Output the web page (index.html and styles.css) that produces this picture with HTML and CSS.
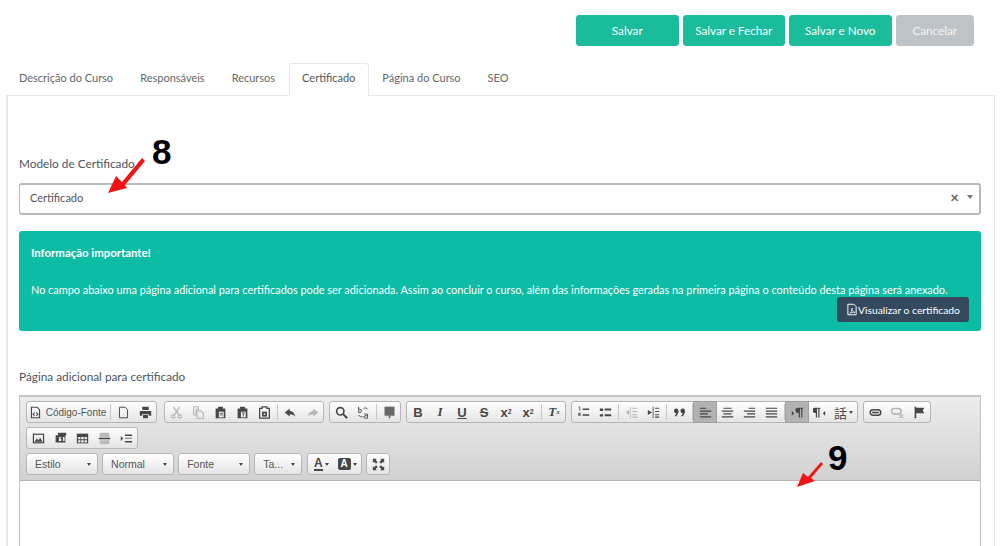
FILE: index.html
```html
<!DOCTYPE html>
<html lang="pt-BR">
<head>
    <meta charset="UTF-8">
    <title>Certificado</title>
    <link rel="stylesheet" href="styles.css">
</head>
<body>
    <svg class="sprite" width="0" height="0">
        <symbol id="i-source" viewBox="0 0 16 16"><path d="M3 1.500h7l3 3v10H3z" fill="none" stroke="currentColor" stroke-width="1.400"/><path d="M7 8l-2 2 2 2M9 8l2 2-2 2" fill="none" stroke="currentColor" stroke-width="1.300"/></symbol>
        <symbol id="i-new" viewBox="0 0 16 16"><path d="M3 1.500h7l3 3v10H3z" fill="none" stroke="currentColor" stroke-width="1.200"/></symbol>
        <symbol id="i-print" viewBox="0 0 16 16"><path d="M4 1h8v4H4zM1 6h14v6h-3v-2H4v2H1zM5 11h6v4H5z" fill="currentColor"/></symbol>
        <symbol id="i-cut" viewBox="0 0 16 16"><path d="M4 1l7 10M12 1L5 11" stroke="currentColor" stroke-width="1.600" fill="none"/><circle cx="4" cy="13" r="2" fill="none" stroke="currentColor" stroke-width="1.500"/><circle cx="12" cy="13" r="2" fill="none" stroke="currentColor" stroke-width="1.500"/></symbol>
        <symbol id="i-copy" viewBox="0 0 16 16"><path d="M2 1h6v3H5v7H2zM6 6h5l3 3v6H6z" fill="none" stroke="currentColor" stroke-width="1.300"/></symbol>
        <symbol id="i-paste" viewBox="0 0 16 16"><path d="M2 3h3V1h6v2h3v12H2z" fill="currentColor"/><path d="M6 7h6v7H6z" fill="#f1f1f1"/><path d="M7 9h4M7 11h4" stroke="currentColor"/></symbol>
        <symbol id="i-paste-t" viewBox="0 0 16 16"><path d="M2 3h3V1h6v2h3v12H2z" fill="currentColor"/><path d="M6 7h6v7H6z" fill="#f1f1f1"/><path d="M7 8.500h4M9 8.500V13" stroke="currentColor"/></symbol>
        <symbol id="i-paste-w" viewBox="0 0 16 16"><path d="M2 3h3V1h6v2h3v12H2z" fill="none" stroke="currentColor" stroke-width="1.500"/><path d="M5 7h6v6H5z" fill="currentColor"/><path d="M7 9h2v2H7z" fill="#f1f1f1"/></symbol>
        <symbol id="i-undo" viewBox="0 0 16 16"><path d="M7 3L1 8l6 5v-3c3 0 5 1 7 3-1-4-3-7-7-7z" fill="currentColor"/></symbol>
        <symbol id="i-redo" viewBox="0 0 16 16"><path d="M9 3l6 5-6 5v-3c-3 0-5 1-7 3 1-4 3-7 7-7z" fill="currentColor"/></symbol>
        <symbol id="i-find" viewBox="0 0 16 16"><circle cx="6.500" cy="6.500" r="4.500" fill="none" stroke="currentColor" stroke-width="2"/><path d="M10 10l5 5" stroke="currentColor" stroke-width="2.400"/></symbol>
        <symbol id="i-replace" viewBox="0 0 16 16"><path d="M2 1v7h1.500a2 2 0 0 0 0-4H2M9 10h4v5h-3a1.500 1.500 0 0 1 0-3h3M8 3c2-1 4-1 5 1M7 13c-2 1-4 0-5-2" fill="none" stroke="currentColor" stroke-width="1.100"/></symbol>
        <symbol id="i-select" viewBox="0 0 16 16"><path d="M2 1h12v11H9v3H7v-3H2z" fill="#666"/><path d="M2 1h12v11H2z" fill="none" stroke="#999" stroke-dasharray="1 1"/></symbol>
        <symbol id="i-ol" viewBox="0 0 16 16"><path d="M7 3h8v2H7zM7 10h8v2H7z" fill="currentColor"/><path d="M2 1.500l1.500-.5v5M1 9h3v1.500H2v1h2.500" fill="none" stroke="currentColor"/></symbol>
        <symbol id="i-ul" viewBox="0 0 16 16"><path d="M7 3h8v2.500H7zM7 10h8v2.500H7zM1 3h4v3H1zM1 10h4v3H1z" fill="currentColor"/></symbol>
        <symbol id="i-outdent" viewBox="0 0 16 16"><path d="M9 2h6v1.500H9zM9 6h6v1.500H9zM9 10h6v1.500H9zM9 13h6v1.500H9zM7 1v14H6V1zM1 8l4-3v6z" fill="currentColor"/></symbol>
        <symbol id="i-indent" viewBox="0 0 16 16"><path d="M10 2h5v1.500h-5zM10 6h5v1.500h-5zM10 10h5v1.500h-5zM10 13h5v1.500h-5zM8 1v14H7V1zM6 8L1 5v6z" fill="currentColor"/></symbol>
        <symbol id="i-quote" viewBox="0 0 16 16"><circle cx="4" cy="6" r="2.800" fill="currentColor"/><circle cx="12" cy="6" r="2.800" fill="currentColor"/><path d="M6.800 6c0 3-1.500 5.500-4 7l-.8-1c1.500-1 2-3 2-5zM14.800 6c0 3-1.500 5.500-4 7l-.8-1c1.500-1 2-3 2-5z" fill="currentColor"/></symbol>
        <symbol id="i-left" viewBox="0 0 16 16"><path d="M1 2h8v1.500H1zM1 5.500h14V7H1zM1 9h10v1.500H1zM1 12.500h14V14H1z" fill="currentColor"/></symbol>
        <symbol id="i-center" viewBox="0 0 16 16"><path d="M3 2h10v1.500H3zM1 5.500h14V7H1zM3 9h10v1.500H3zM1 12.500h14V14H1z" fill="currentColor"/></symbol>
        <symbol id="i-right" viewBox="0 0 16 16"><path d="M7 2h8v1.500H7zM1 5.500h14V7H1zM5 9h10v1.500H5zM1 12.500h14V14H1z" fill="currentColor"/></symbol>
        <symbol id="i-justify" viewBox="0 0 16 16"><path d="M1 2h14v1.500H1zM1 5.500h14V7H1zM1 9h14v1.500H1zM1 12.500h14V14H1z" fill="currentColor"/></symbol>
        <symbol id="i-ltr" viewBox="0 0 16 16"><path d="M1 6l3 3-3 3zM8 2h7v1.500h-1V14h-1.500V3.500H11V14H9.500V8.500A3.300 3.300 0 0 1 8 2z" fill="currentColor"/></symbol>
        <symbol id="i-rtl" viewBox="0 0 16 16"><path d="M15 6l-3 3 3 3zM2 2h7v1.500H8V14H6.500V3.500H5V14H3.500V8.500A3.300 3.300 0 0 1 2 2z" fill="currentColor"/></symbol>
        <symbol id="i-link" viewBox="0 0 16 16"><path d="M5 4.500h6a3.500 3.500 0 0 1 0 7H5a3.500 3.500 0 0 1 0-7z" fill="none" stroke="currentColor" stroke-width="1.800"/><path d="M4 8h8" stroke="currentColor" stroke-width="2"/></symbol>
        <symbol id="i-unlink" viewBox="0 0 16 16"><path d="M4 3h5a3.500 3.500 0 0 1 0 7H4a3.500 3.500 0 0 1 0-7z" fill="none" stroke="currentColor" stroke-width="2"/><path d="M10 10l5 5M15 10l-5 5" stroke="currentColor" stroke-width="1.500"/></symbol>
        <symbol id="i-flag" viewBox="0 0 16 16"><path d="M2 1h2v14H2zM4 2h10l-2 3.500L14 9H4z" fill="currentColor"/></symbol>
        <symbol id="i-image" viewBox="0 0 16 16"><path d="M1 2h14v12H1z" fill="currentColor"/><path d="M2.500 3.500h11v9h-11z" fill="#eee"/><path d="M3 12l3-4 2 2 2-3 3 5z" fill="currentColor"/></symbol>
        <symbol id="i-flash" viewBox="0 0 16 16"><path d="M5 1h10v3h-1v9H2V4h3z" fill="currentColor"/><path d="M6 6h3v1H7v1h2v3H6zM11 6h2v5h-2z" fill="#eee"/></symbol>
        <symbol id="i-table" viewBox="0 0 16 16"><path d="M1 2h14v12H1z" fill="currentColor"/><path d="M2.500 6h3v3h-3zM6.500 6h3v3h-3zM10.500 6h3v3h-3zM2.500 10h3v3h-3zM6.500 10h3v3h-3zM10.500 10h3v3h-3z" fill="#eee"/></symbol>
        <symbol id="i-rule" viewBox="0 0 16 16"><path d="M2 1h12v5H2zM2 10h12v5H2z" fill="#bbb"/><path d="M1 7h14v2H1z" fill="currentColor"/></symbol>
        <symbol id="i-break" viewBox="0 0 16 16"><path d="M1 5l3 3-3 3zM6 3h9v2H6zM6 11h9v2H6z" fill="currentColor"/><path d="M6 7h9v1.500H6z" fill="#888"/></symbol>
        <symbol id="i-expand" viewBox="0 0 16 16"><path d="M1 1h5L4.500 2.500 7 5 5 7 2.500 4.500 1 6zM15 1v5l-1.500-1.500L11 7 9 5l2.500-2.500L10 1zM1 15v-5l1.500 1.500L5 9l2 2-2.500 2.500L6 15zM15 15h-5l1.500-1.500L9 11l2-2 2.500 2.500L15 10z" fill="currentColor"/></symbol>
        <symbol id="i-pdf" viewBox="0 0 16 16"><path d="M2.500 1h8l3 3v11h-11z" fill="none" stroke="currentColor" stroke-width="1.300"/><path d="M5 13c2-1 3-4 3-7 0 3 1 5 4 6-3-.5-5 0-7 1z" fill="none" stroke="currentColor"/></symbol>
    </svg>

    <div class="page">
        <div class="actions">
            <button class="btn btn-save">Salvar</button>
            <button class="btn">Salvar e Fechar</button>
            <button class="btn">Salvar e Novo</button>
            <button class="btn btn-cancel">Cancelar</button>
        </div>

        <ul class="tabs">
            <li>Descrição do Curso</li>
            <li>Responsáveis</li>
            <li>Recursos</li>
            <li class="active">Certificado</li>
            <li>Página do Curso</li>
            <li>SEO</li>
        </ul>

        <div class="panel">
            <label class="field-label">Modelo de Certificado</label>
            <div class="select">
                <span>Certificado</span>
                <span class="select-clear">×</span>
                <span class="select-caret"></span>
            </div>

            <div class="notice">
                <strong>Informação importante!</strong>
                <p>No campo abaixo uma página adicional para certificados pode ser adicionada. Assim ao concluir o curso, além das informações geradas na primeira página o conteúdo desta página será anexado.</p>
                <div class="notice-foot">
                    <button class="btn-dark"><svg class="pdf-icon"><use href="#i-pdf"/></svg>Visualizar o certificado</button>
                </div>
            </div>

            <label class="field-label field-label-editor">Página adicional para certificado</label>
            <div class="editor">
                <div class="toolbar">
                    <div class="tb-row">
                        <div class="tb-group tb-group-first">
                            <span class="tb-btn tb-source"><svg class="ico"><use href="#i-source"/></svg>Código-Fonte</span>
                            <i class="tb-sep"></i>
                            <span class="tb-btn"><svg class="ico"><use href="#i-new"/></svg></span>
                            <span class="tb-btn"><svg class="ico"><use href="#i-print"/></svg></span>
                        </div>
                        <div class="tb-group">
                            <span class="tb-btn off"><svg class="ico"><use href="#i-cut"/></svg></span>
                            <span class="tb-btn off"><svg class="ico"><use href="#i-copy"/></svg></span>
                            <span class="tb-btn"><svg class="ico"><use href="#i-paste"/></svg></span>
                            <span class="tb-btn"><svg class="ico"><use href="#i-paste-t"/></svg></span>
                            <span class="tb-btn"><svg class="ico"><use href="#i-paste-w"/></svg></span>
                            <i class="tb-sep"></i>
                            <span class="tb-btn"><svg class="ico"><use href="#i-undo"/></svg></span>
                            <span class="tb-btn off"><svg class="ico"><use href="#i-redo"/></svg></span>
                        </div>
                        <div class="tb-group">
                            <span class="tb-btn"><svg class="ico"><use href="#i-find"/></svg></span>
                            <span class="tb-btn"><svg class="ico"><use href="#i-replace"/></svg></span>
                            <i class="tb-sep"></i>
                            <span class="tb-btn"><svg class="ico"><use href="#i-select"/></svg></span>
                        </div>
                        <div class="tb-group">
                            <span class="tb-btn tb-text tb-bold">B</span>
                            <span class="tb-btn tb-text tb-italic">I</span>
                            <span class="tb-btn tb-text tb-under">U</span>
                            <span class="tb-btn tb-text tb-strike">S</span>
                            <span class="tb-btn tb-text tb-script">x<sub>2</sub></span>
                            <span class="tb-btn tb-text tb-script">x<sup>2</sup></span>
                            <i class="tb-sep"></i>
                            <span class="tb-btn tb-text tb-italic tb-clear">T<sub>x</sub></span>
                        </div>
                        <div class="tb-group">
                            <span class="tb-btn"><svg class="ico"><use href="#i-ol"/></svg></span>
                            <span class="tb-btn"><svg class="ico"><use href="#i-ul"/></svg></span>
                            <i class="tb-sep"></i>
                            <span class="tb-btn off"><svg class="ico"><use href="#i-outdent"/></svg></span>
                            <span class="tb-btn"><svg class="ico"><use href="#i-indent"/></svg></span>
                            <i class="tb-sep"></i>
                            <span class="tb-btn"><svg class="ico"><use href="#i-quote"/></svg></span>
                            <i class="tb-sep"></i>
                            <span class="tb-btn on"><svg class="ico"><use href="#i-left"/></svg></span>
                            <span class="tb-btn"><svg class="ico"><use href="#i-center"/></svg></span>
                            <span class="tb-btn"><svg class="ico"><use href="#i-right"/></svg></span>
                            <span class="tb-btn"><svg class="ico"><use href="#i-justify"/></svg></span>
                            <i class="tb-sep"></i>
                            <span class="tb-btn on"><svg class="ico"><use href="#i-ltr"/></svg></span>
                            <span class="tb-btn"><svg class="ico"><use href="#i-rtl"/></svg></span>
                            <span class="tb-btn tb-lang">話<b class="mini-caret"></b></span>
                        </div>
                        <div class="tb-group">
                            <span class="tb-btn"><svg class="ico"><use href="#i-link"/></svg></span>
                            <span class="tb-btn off"><svg class="ico"><use href="#i-unlink"/></svg></span>
                            <span class="tb-btn"><svg class="ico"><use href="#i-flag"/></svg></span>
                        </div>
                    </div>
                    <div class="tb-row">
                        <div class="tb-group">
                            <span class="tb-btn"><svg class="ico"><use href="#i-image"/></svg></span>
                            <span class="tb-btn"><svg class="ico"><use href="#i-flash"/></svg></span>
                            <span class="tb-btn"><svg class="ico"><use href="#i-table"/></svg></span>
                            <span class="tb-btn"><svg class="ico"><use href="#i-rule"/></svg></span>
                            <span class="tb-btn"><svg class="ico"><use href="#i-break"/></svg></span>
                        </div>
                    </div>
                    <div class="tb-row tb-row-combos">
                        <div class="tb-combo tb-combo-wide">Estilo<b class="mini-caret"></b></div>
                        <div class="tb-combo tb-combo-wide">Normal<b class="mini-caret"></b></div>
                        <div class="tb-combo tb-combo-wide">Fonte<b class="mini-caret"></b></div>
                        <div class="tb-combo tb-combo-small">Ta...<b class="mini-caret"></b></div>
                        <div class="tb-group tb-colors">
                            <span class="tb-color"><span class="color-a">A</span><b class="mini-caret"></b></span>
                            <span class="tb-color"><span class="color-bg">A</span><b class="mini-caret"></b></span>
                        </div>
                        <div class="tb-group">
                            <span class="tb-btn"><svg class="ico"><use href="#i-expand"/></svg></span>
                        </div>
                    </div>
                </div>
                <div class="editor-body"></div>
            </div>
        </div>
    </div>

    <span class="step step-8">8</span>
    <svg class="arrow arrow-8" viewBox="0 0 38 38"><path d="M1 37L9 20l6 6L35 2l3 3-20 24 2 3z" fill="#f01414"/></svg>
    <span class="step step-9">9</span>
    <svg class="arrow arrow-9" viewBox="0 0 28 28"><path d="M1 27L7 13l5 4L25 2l2 2-12 14 4 3z" fill="#f01414"/></svg>
</body>
</html>
```

FILE: styles.css
```css
html, body {
    margin: 0;
    height: 546px;
    overflow: hidden;
    background: #fff;
}

body {
    font-family: Lato, "Open Sans", sans-serif;
    font-size: 11px;
    color: #555;
    position: relative;
}

.sprite {
    display: none;
}

.page {
    height: 546px;
    box-sizing: border-box;
    padding: 15px 5px 0 6px;
    overflow: hidden;
}

/* top buttons */
.actions {
    display: flex;
    justify-content: flex-end;
    gap: 4px;
    padding-right: 21px;
}

.btn {
    width: 102.500px;
    height: 31px;
    padding: 0 0 2px;
    border: 1px solid #1abc9c;
    border-radius: 3px;
    background: #1abc9c;
    color: #fff;
    font-family: inherit;
    font-size: 11.700px;
}

.btn-cancel {
    width: 78.500px;
    background: #bdc3c7;
    border-color: #bdc3c7;
    color: #f4f5f5;
}

/* tabs */
.tabs {
    display: flex;
    list-style: none;
    margin: 17px 0 0 -0.500px;
    padding: 0;
    position: relative;
    z-index: 1;
}

.tabs li {
    padding: 6px 12.500px 10px;
    line-height: 16px;
    border: 1px solid transparent;
    border-bottom: 0;
    border-radius: 3px 3px 0 0;
    color: #666;
}

.tabs .active {
    background: #fff;
    border-color: #e7e7e7;
    color: #555;
}

.panel {
    margin-top: -1px;
    padding: 60px 13px 0 11px;
    border: 1px solid #e7e7e7;
    border-width: 1px 1px 0 2px;
}

.field-label {
    display: block;
    font-size: 11.800px;
    line-height: 16px;
    color: #4a5560;
}

/* select */
.select {
    display: flex;
    align-items: center;
    height: 24px;
    margin-top: 11px;
    padding: 0 0 4px 10px;
    border: 1px solid #b5b9bc;
    border-width: 2px 2px 2px 1px;
    border-radius: 3px;
    color: #555;
}

.select span:first-child {
    flex: 1;
}

.select-clear {
    font-size: 15px;
    font-weight: 700;
    color: #666;
    margin-right: 8px;
}

.select-caret {
    width: 0;
    height: 0;
    margin-right: 6px;
    border: 3px solid transparent;
    border-top: 4px solid #777;
    border-bottom: 0;
}

/* aviso */
.notice {
    height: 100px;
    box-sizing: border-box;
    margin-top: 16px;
    padding: 14px 12px 0;
    border-radius: 3px;
    background: #0cbca5;
    color: #fff;
    line-height: 16px;
}

.notice strong {
    font-size: 11.400px;
}

.notice p {
    margin: 21px 0 0;
    font-size: 10.900px;
    white-space: nowrap;
}

.notice-foot {
    display: flex;
    justify-content: flex-end;
}

.btn-dark {
    display: flex;
    align-items: center;
    height: 25px;
    width: 132px;
    margin-top: -1px;
    padding: 0 0 0 9px;
    border: 0;
    border-radius: 3px;
    background: #34495e;
    color: #fff;
    font-family: inherit;
    font-size: 10.300px;
}

.pdf-icon {
    width: 12px;
    height: 13px;
}

.field-label-editor {
    margin-top: 38px;
}

/* editor */
.editor {
    margin-top: 10px;
    border: 1px solid #c4c4c4;
    border-width: 2px 1px 0;
}

.toolbar {
    padding: 4px 6px 5px;
    border-bottom: 1px solid #b6b6b6;
    background: linear-gradient(#ececec, #d0d1d0);
    font-family: "Liberation Sans", Arial, sans-serif;
    font-size: 10.500px;
    color: #474747;
}

.tb-row {
    display: flex;
    gap: 5px;
    margin-bottom: 4px;
}

.tb-row:last-child {
    margin-bottom: 0;
}

.tb-row-combos {
    gap: 4.600px;
}

.tb-group {
    display: flex;
    align-items: center;
    height: 20px;
    border: 1px solid #b6b6b6;
    border-radius: 3px;
    background: linear-gradient(#fff, #e4e4e4);
}

.tb-group-first {
    margin-right: 2px;
}

.tb-btn {
    display: flex;
    align-items: center;
    justify-content: center;
    width: 22px;
    height: 20px;
    flex: none;
}

.tb-sep {
    width: 1px;
    height: 16px;
    margin: 0 1.500px;
    background: #c8c8c8;
}

.ico {
    width: 13px;
    height: 13px;
    color: #474747;
}

.off .ico {
    color: #b5b5b5;
}

.on {
    box-shadow: 0 0 0 1px #a0a0a0;
    background: #b2b2b2;
}

.tb-source {
    box-sizing: border-box;
    width: 81px;
    padding-left: 0;
    gap: 4px;
    color: #555;
    font-size: 10px;
}

.tb-text {
    font-size: 13px;
    color: #474747;
}

.tb-bold {
    font-weight: 700;
}

.tb-italic {
    font-family: "Liberation Serif", serif;
    font-style: italic;
    font-weight: 700;
}

.tb-under {
    font-weight: 700;
    text-decoration: underline;
}

.tb-strike {
    font-weight: 700;
    text-decoration: line-through;
}

.tb-script {
    font-weight: 700;
}

.tb-script sub,
.tb-script sup,
.tb-clear sub {
    font-size: 7px;
    line-height: 0;
}

.tb-lang {
    font-family: "Noto Sans CJK SC", sans-serif;
    font-size: 13px;
    width: 27px;
}

.mini-caret {
    display: inline-block;
    width: 0;
    height: 0;
    border: 2px solid transparent;
    border-top: 3px solid #474747;
    border-bottom: 0;
    margin-left: 2px;
    flex: none;
}

.tb-combo {
    display: flex;
    align-items: center;
    justify-content: space-between;
    height: 20px;
    padding: 0 6px 0 8px;
    border: 1px solid #b6b6b6;
    border-radius: 3px;
    background: linear-gradient(#fff, #e4e4e4);
    color: #555;
}

.tb-combo-wide {
    width: 55.500px;
}

.tb-combo-small {
    width: 32px;
}

.tb-colors {
    padding: 0 4px 0 6px;
    gap: 9px;
}

.tb-color {
    display: flex;
    align-items: center;
}

.color-a {
    font-weight: 700;
    font-size: 12px;
    line-height: 11px;
    border-bottom: 2px solid #474747;
}

.color-bg {
    width: 13px;
    height: 12px;
    border-radius: 2px;
    background: #474747;
    color: #fff;
    font-weight: 700;
    font-size: 10px;
    line-height: 12px;
    text-align: center;
}

.editor-body {
    height: 65px;
    background: #fff;
}

/* numeros e setas por cima da tela */
.step {
    position: absolute;
    font-family: "Liberation Sans", Arial, sans-serif;
    font-weight: 700;
    font-size: 35px;
    line-height: 35px;
    color: #000;
}

.step-8 {
    left: 152px;
    top: 134px;
}

.step-9 {
    left: 828px;
    top: 440px;
}

.arrow {
    position: absolute;
}

.arrow-8 {
    left: 107px;
    top: 156px;
    width: 38px;
    height: 38px;
}

.arrow-9 {
    left: 796px;
    top: 460px;
    width: 28px;
    height: 28px;
}
```
